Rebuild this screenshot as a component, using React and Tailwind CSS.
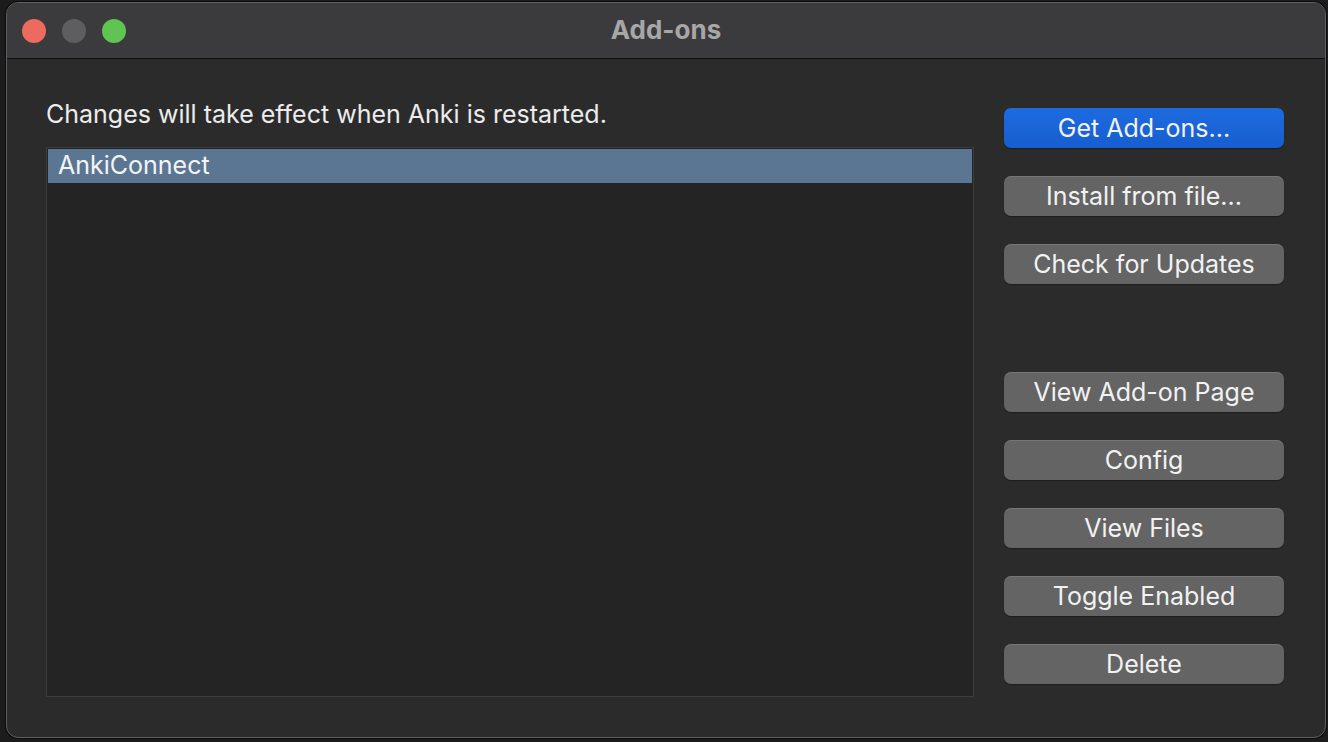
import React from 'react';

const topButtons = ['Install from file...', 'Check for Updates'];
const bottomButtons = ['View Add-on Page', 'Config', 'View Files', 'Toggle Enabled', 'Delete'];

const font = { fontFamily: 'Inter, "Noto Sans", "Liberation Sans", sans-serif' };

function TrafficLights() {
  return (
    <div className="flex items-center gap-4 pl-[15px]">
      <span className="h-6 w-6 rounded-full bg-[#ec6a5e]" />
      <span className="h-6 w-6 rounded-full bg-[#5e5e60]" />
      <span className="h-6 w-6 rounded-full bg-[#60c453]" />
    </div>
  );
}

function MacButton({ children, primary }) {
  return (
    <button
      className={
        'h-10 w-[280px] rounded-[7px] text-[25px] leading-none text-[#f2f2f2] ' +
        (primary
          ? 'bg-gradient-to-b from-[#1d6be0] to-[#175ecf] shadow-[0_1px_1px_rgba(0,0,0,0.35)]'
          : 'bg-[#646464] shadow-[inset_0_1px_0_rgba(255,255,255,0.12),0_1px_1px_rgba(0,0,0,0.35)]')
      }
    >
      {children}
    </button>
  );
}

export default function App() {
  return (
    <div className="h-[742px] w-[1328px] overflow-hidden bg-[#1c1c1c] pl-[6px] pt-[2px]" style={font}>
      <div className="flex h-[736px] w-[1320px] flex-col overflow-hidden rounded-[12px] border border-[#5f5f5f] bg-[#2b2b2b] shadow-[0_0_0_1px_#0b0b0b]">
        <div className="relative flex h-[56px] items-center border-b border-[#0e0e0e] bg-[#3b3b3d]">
          <TrafficLights />
          <div className="absolute inset-0 flex items-center justify-center pb-[2px] text-[26px] font-bold text-[#a7a7a7]">
            Add-ons
          </div>
        </div>

        <div className="flex flex-1 pl-[39px] pr-[40px]">
          <div className="flex w-[928px] flex-col pt-[40px]">
            <p className="h-[30px] text-[25px] leading-[30px] text-[#ececec]">
              Changes will take effect when Anki is restarted.
            </p>
            <div className="mt-[18px] h-[550px] border border-[#3d3d3d] bg-[#242424] p-px">
              <div className="flex h-[34px] items-center bg-[#5b7692] pl-[10px] text-[25px] text-[#f4f4f4]">
                AnkiConnect
              </div>
            </div>
          </div>

          <div className="ml-[30px] flex flex-col pt-[49px]">
            <div className="flex flex-col gap-7">
              <MacButton primary>Get Add-ons...</MacButton>
              {topButtons.map((label) => (
                <MacButton key={label}>{label}</MacButton>
              ))}
            </div>
            <div className="mt-[88px] flex flex-col gap-7">
              {bottomButtons.map((label) => (
                <MacButton key={label}>{label}</MacButton>
              ))}
            </div>
          </div>
        </div>
      </div>
    </div>
  );
}
